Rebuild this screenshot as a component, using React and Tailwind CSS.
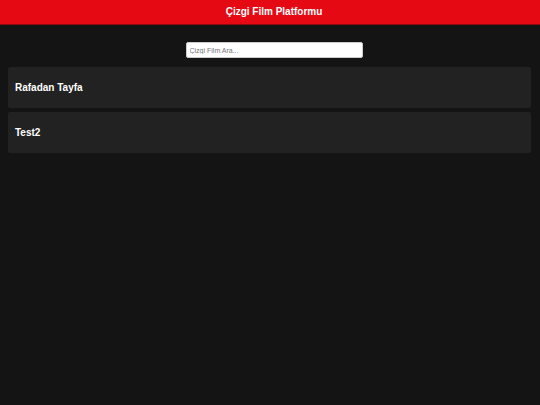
export default function App() {
  return (
    <div className="min-h-[405px] w-full bg-[#141414] font-['Liberation_Sans',Arial,sans-serif]">
      <header className="flex h-[25px] items-center justify-center border-b border-[#8c0a10] bg-[#e50914] pl-2">
        <h1 className="text-[10px] font-bold leading-none text-white">Çizgi Film Platformu</h1>
      </header>
      <div className="flex justify-center pl-2 pt-[17px]">
        <input
          type="text"
          placeholder="Çizgi Film Ara..."
          className="h-[16px] w-[177px] rounded-[2px] border border-[#ccc] bg-white px-[3px] text-[7px] text-black outline-none placeholder:text-[#757575]"
        />
      </div>
      <div className="flex flex-col gap-[4px] pl-2 pr-[9px] pt-[9px]">
        <div className="flex h-[41px] items-center rounded-[2px] bg-[#222222] px-[7px]">
          <h2 className="text-[10px] font-bold leading-none text-white">Rafadan Tayfa</h2>
        </div>
        <div className="flex h-[41px] items-center rounded-[2px] bg-[#222222] px-[7px]">
          <h2 className="text-[10px] font-bold leading-none text-white">Test2</h2>
        </div>
      </div>
    </div>
  );
}
